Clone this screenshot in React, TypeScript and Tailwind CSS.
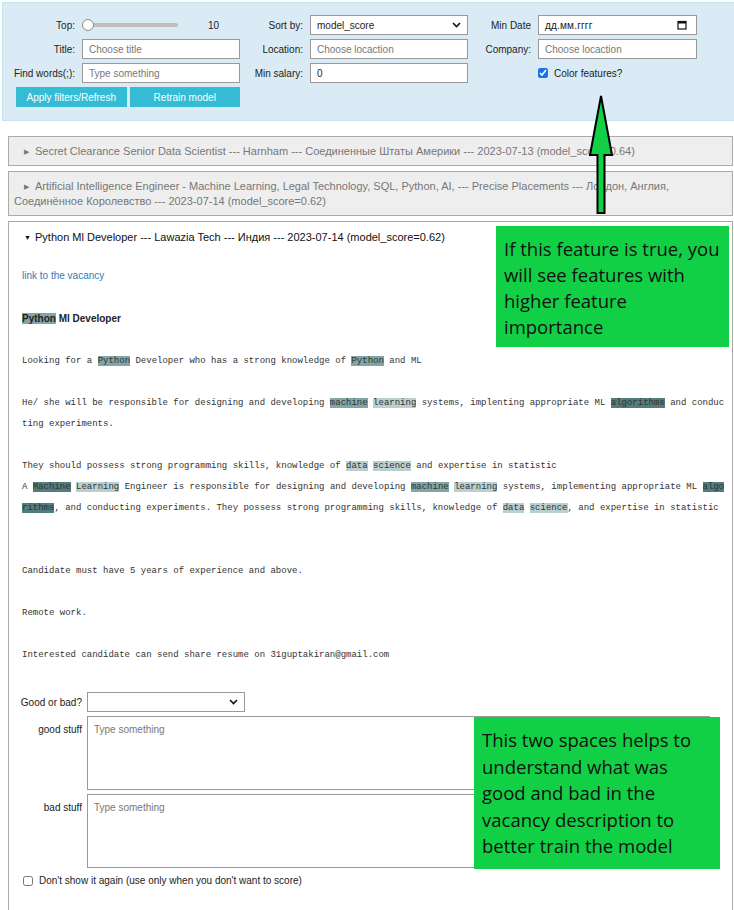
import React from "react";

const mono = { dark: "bg-[#517d7d]", mid: "bg-[#82a5a5]", light: "bg-[#bad0d0]" };

function Hl({ c, children }: { c: "dark" | "mid" | "light"; children: React.ReactNode }) {
  return <span className={mono[c]}>{children}</span>;
}

function Chevron() {
  return (
    <svg width="9" height="6" viewBox="0 0 9 6" className="shrink-0">
      <polyline points="1,1 4.5,4.5 8,1" fill="none" stroke="#111" strokeWidth="1.6" />
    </svg>
  );
}

function Field({ placeholder, value }: { placeholder?: string; value?: string }) {
  return (
    <div className="h-[20px] border border-[#9a9a9a] bg-white px-[6px] flex items-center text-[10px]">
      {value ? <span className="text-[#222]">{value}</span> : <span className="text-[#777]">{placeholder}</span>}
    </div>
  );
}

function Label({ children }: { children: React.ReactNode }) {
  return <div className="text-right pr-[7px] text-[10px] text-[#222] self-center whitespace-nowrap">{children}</div>;
}

function Caret({ open }: { open?: boolean }) {
  return (
    <span className="inline-block w-[6px] ml-[10px] mr-[5px] text-[7px] leading-[15px] align-top">{open ? "▼" : "▶"}</span>
  );
}

export default function App() {
  return (
    <div className="relative w-[734px] min-h-[910px] bg-white p-[2px] pr-0" style={{ fontFamily: "'Liberation Sans', Arial, sans-serif" }}>
      {/* Filters */}
      <div className="bg-[#dbebf5] border border-[#c8e4f0] border-r-0 pt-[12px] pb-[13px]">
        <div className="grid grid-cols-[79px_158px_70px_158px_70px_159px] gap-y-[4px] auto-rows-[20px]">
          <Label>Top:</Label>
          <div className="flex items-center">
            <div className="relative w-[96px] h-[12px] flex items-center">
              <div className="ml-[6px] w-[90px] h-[4px] rounded bg-[#bfbfbf]" />
              <div className="absolute left-0 top-0 w-[12px] h-[12px] rounded-full bg-white border border-[#8a8a8a]" />
            </div>
            <span className="ml-[30px] text-[10px] text-[#222]">10</span>
          </div>
          <Label>Sort by:</Label>
          <div className="h-[20px] border border-[#9a9a9a] bg-white px-[6px] flex items-center justify-between text-[10px] text-[#222]">
            <span>model_score</span>
            <Chevron />
          </div>
          <Label>Min Date</Label>
          <div className="h-[20px] border border-[#9a9a9a] bg-white px-[6px] flex items-center justify-between text-[10px] text-[#222]">
            <span className="tracking-[0.2px]">дд.мм.гггг</span>
            <svg width="10" height="10" viewBox="0 0 10 10" className="mr-[3px]">
              <rect x="1" y="1.5" width="8" height="7.5" fill="none" stroke="#111" strokeWidth="1.2" />
              <rect x="1" y="1.5" width="8" height="2" fill="#111" />
            </svg>
          </div>

          <Label>Title:</Label>
          <Field placeholder="Choose title" />
          <Label>Location:</Label>
          <Field placeholder="Choose locaction" />
          <Label>Company:</Label>
          <Field placeholder="Choose locaction" />

          <Label>Find words(;):</Label>
          <Field placeholder="Type something" />
          <Label>Min salary:</Label>
          <Field value="0" />
          <div />
          <div className="flex items-center gap-[6px] text-[10px] text-[#222]">
            <input type="checkbox" defaultChecked className="w-[10px] h-[10px] m-0 accent-[#1a73e8]" />
            <span>Color features?</span>
          </div>

          <div className="col-span-2 pl-[13px] flex gap-[3px]">
            <button className="w-[111px] h-[20px] bg-[#34bcd4] text-white text-[10px]">Apply filters/Refresh</button>
            <button className="w-[111px] h-[20px] bg-[#34bcd4] text-white text-[10px]">Retrain model</button>
          </div>
        </div>
      </div>

      {/* Vacancies */}
      <div className="ml-[6px] mr-[1px] mt-[15px] flex flex-col gap-[5px]">
        <div className="border border-[#aaaaaa] bg-[#eeeeee] px-[5px] pt-[7px] pb-[6px] text-[11px] leading-[15px] text-[#777]">
          <Caret />
          Secret Clearance Senior Data Scientist --- Harnham --- Соединенные Штаты Америки --- 2023-07-13 (model_score=0.64)
        </div>
        <div className="border border-[#aaaaaa] bg-[#eeeeee] px-[5px] pt-[7px] pb-[6px] text-[11px] leading-[15px] text-[#777]">
          <Caret />
          Artificial Intelligence Engineer - Machine Learning, Legal Technology, SQL, Python, AI, --- Precise Placements --- Лондон, Англия, Соединённое Королевство --- 2023-07-14 (model_score=0.62)
        </div>

        <div className="border border-[#aaaaaa] bg-white pb-[22px]">
          <div className="px-[5px] pt-[8px] text-[11px] leading-[15px] text-[#111]">
            <Caret open />
            Python Ml Developer --- Lawazia Tech --- Индия --- 2023-07-14 (model_score=0.62)
          </div>
          <div className="pl-[13px] pr-[8px]">
            <div className="mt-[23px] text-[10px] leading-[15px] text-[#337ab7]">link to the vacancy</div>
            <div className="mt-[28px] text-[10px] leading-[15px] font-bold text-[#222]">
              <span className="bg-[#82a5a5]">Python</span> Ml Developer
            </div>
            <div className="mt-[25px] text-[9px] leading-[21px] text-[#333] whitespace-pre" style={{ fontFamily: "'Liberation Mono', 'DejaVu Sans Mono', monospace" }}>
              <div>Looking for a <Hl c="mid">Python</Hl> Developer who has a strong knowledge of <Hl c="mid">Python</Hl> and ML</div>
              <div>{" "}</div>
              <div>He/ she will be responsible for designing and developing <Hl c="mid">machine</Hl> <Hl c="light">learning</Hl> systems, implenting appropriate ML <Hl c="dark">algorithms</Hl> and conduc</div>
              <div>ting experiments.</div>
              <div>{" "}</div>
              <div>They should possess strong programming skills, knowledge of <Hl c="light">data</Hl> <Hl c="light">science</Hl> and expertise in statistic</div>
              <div>A <Hl c="dark">Machine</Hl> <Hl c="light">Learning</Hl> Engineer is responsible for designing and developing <Hl c="mid">machine</Hl> <Hl c="light">learning</Hl> systems, implementing appropriate ML <Hl c="dark">algo</Hl></div>
              <div><Hl c="dark">rithms</Hl>, and conducting experiments. They possess strong programming skills, knowledge of <Hl c="light">data</Hl> <Hl c="light">science</Hl>, and expertise in statistic</div>
              <div>{" "}</div>
              <div>{" "}</div>
              <div>Candidate must have 5 years of experience and above.</div>
              <div>{" "}</div>
              <div>Remote work.</div>
              <div>{" "}</div>
              <div>Interested candidate can send share resume on 31guptakiran@gmail.com</div>
            </div>

            <div className="mt-[26px] -ml-[5px] grid grid-cols-[65px_623px] gap-x-[5px] gap-y-[4px] text-[10px] text-[#222]">
              <div className="text-right self-center whitespace-nowrap">Good or bad?</div>
              <div className="w-[158px] h-[20px] border border-[#9a9a9a] bg-white px-[6px] flex items-center justify-end">
                <Chevron />
              </div>
              <div className="text-right pt-[6px] whitespace-nowrap">good stuff</div>
              <div className="h-[74px] border border-[#9a9a9a] bg-white px-[6px] pt-[5px] text-[#777]">Type something</div>
              <div className="text-right pt-[6px] whitespace-nowrap">bad stuff</div>
              <div className="h-[74px] border border-[#9a9a9a] bg-white px-[6px] pt-[5px] text-[#777]">Type something</div>
            </div>
            <div className="mt-[5px] ml-[1px] flex items-center gap-[6px] text-[10px] text-[#222]">
              <input type="checkbox" className="w-[10px] h-[10px] m-0" />
              <span>Don't show it again (use only when you don't want to score)</span>
            </div>
          </div>
        </div>
      </div>

      {/* Annotation overlays */}
      <svg className="absolute left-[586px] top-[92px]" width="30" height="124" viewBox="0 0 30 124">
        <polygon
          points="15,4 26,63 18.5,63 18.5,121 11.5,121 11.5,63 4,63"
          fill="#12d046"
          stroke="#000"
          strokeWidth="2"
          strokeLinejoin="miter"
        />
      </svg>
      <div
        className="absolute left-[496px] top-[226px] w-[233px] h-[121px] bg-[#12d046] pl-[8px] pt-[10px] text-[18.5px] leading-[26px] text-[#111] whitespace-nowrap"
        style={{ fontFamily: "'Open Sans', 'Noto Sans', sans-serif" }}
      >
        If this feature is true, you
        <br />
        will see features with
        <br />
        higher feature
        <br />
        importance
      </div>
      <div
        className="absolute left-[474px] top-[717px] w-[246px] h-[152px] bg-[#12d046] pl-[8px] pt-[10px] text-[18.5px] leading-[26.5px] text-[#111] whitespace-nowrap"
        style={{ fontFamily: "'Open Sans', 'Noto Sans', sans-serif" }}
      >
        This two spaces helps to
        <br />
        understand what was
        <br />
        good and bad in the
        <br />
        vacancy description to
        <br />
        better train the model
      </div>
    </div>
  );
}
